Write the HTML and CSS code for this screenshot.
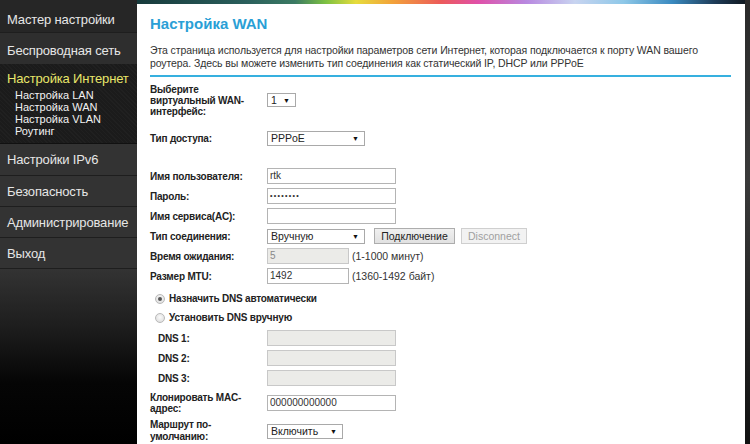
FILE: index.html
```html
<!DOCTYPE html>
<html lang="ru">
<head>
<meta charset="utf-8">
<title>Настройка WAN</title>
<link rel="stylesheet" href="styles.css">
</head>
<body>
<div class="page">
  <nav class="sidebar">
    <div class="nav-item first">Мастер настройки</div>
    <div class="nav-item second">Беспроводная сеть</div>
    <div class="nav-group">
      <div class="nav-group-title">Настройка Интернет</div>
      <div class="nav-sub">Настройка LAN</div>
      <div class="nav-sub">Настройка WAN</div>
      <div class="nav-sub">Настройка VLAN</div>
      <div class="nav-sub">Роутинг</div>
    </div>
    <div class="nav-item tall">Настройки IPv6</div>
    <div class="nav-item">Безопасность</div>
    <div class="nav-item">Администрирование</div>
    <div class="nav-item">Выход</div>
    <div class="nav-fill"></div>
  </nav>

  <main class="content">
    <div class="rainbow"></div>
    <div class="inner">
      <h1 class="title">Настройка WAN</h1>
      <p class="desc">Эта страница используется для настройки параметров сети Интернет, которая подключается к порту WAN вашего роутера. Здесь вы можете изменить тип соединения как статический IP, DHCP или PPPoE</p>
      <div class="rule"></div>

      <div class="form">
        <div class="row row-first">
          <div class="label multi">Выберите<br>виртуальный WAN-<br>интерфейс:</div>
          <div class="select sel-1"><span>1</span><span class="arrow">▼</span></div>
        </div>
        <div class="row row-access">
          <div class="label">Тип доступа:</div>
          <div class="select sel-wide"><span>PPPoE</span><span class="arrow">▼</span></div>
        </div>
        <div class="spacer"></div>
        <div class="row">
          <div class="label">Имя пользователя:</div>
          <div class="input">rtk</div>
        </div>
        <div class="row">
          <div class="label">Пароль:</div>
          <div class="input"><span class="dots">••••••••</span></div>
        </div>
        <div class="row">
          <div class="label">Имя сервиса(AC):</div>
          <div class="input"></div>
        </div>
        <div class="row">
          <div class="label">Тип соединения:</div>
          <div class="select sel-wide"><span>Вручную</span><span class="arrow">▼</span></div>
          <div class="btn btn-connect">Подключение</div>
          <div class="btn btn-disc">Disconnect</div>
        </div>
        <div class="row">
          <div class="label">Время ожидания:</div>
          <div class="input short disabled">5</div>
          <span class="hint">(1-1000 минут)</span>
        </div>
        <div class="row">
          <div class="label">Размер MTU:</div>
          <div class="input short">1492</div>
          <span class="hint">(1360-1492 байт)</span>
        </div>

        <div class="radio-row first-radio">
          <span class="radio checked"></span><span class="radio-label">Назначить DNS автоматически</span>
        </div>
        <div class="radio-row">
          <span class="radio"></span><span class="radio-label">Установить DNS вручную</span>
        </div>

        <div class="row dns-first">
          <div class="label dns">DNS 1:</div>
          <div class="input disabled"></div>
        </div>
        <div class="row">
          <div class="label dns">DNS 2:</div>
          <div class="input disabled"></div>
        </div>
        <div class="row">
          <div class="label dns">DNS 3:</div>
          <div class="input disabled"></div>
        </div>

        <div class="row row-mac">
          <div class="label multi">Клонировать MAC-<br>адрес:</div>
          <div class="input">000000000000</div>
        </div>
        <div class="row row-route">
          <div class="label multi route">Маршрут по-<br>умолчанию:</div>
          <div class="select sel-route"><span>Включить</span><span class="arrow">▼</span></div>
        </div>
      </div>
    </div>
  </main>
  <div class="edge"></div>
</div>
</body>
</html>
```
FILE: styles.css
```css
* { box-sizing: border-box; }

body {
  margin: 0;
  width: 750px;
  height: 444px;
  overflow: hidden;
  background: #000;
  font-family: "Liberation Sans", Arial, sans-serif;
}

.page {
  display: flex;
  height: 444px;
}

/* ---------- sidebar ---------- */
.sidebar {
  width: 137px;
  flex: none;
  display: flex;
  flex-direction: column;
  background: #2f2f2f;
}

.nav-item {
  display: flex;
  align-items: center;
  padding-left: 7px;
  height: 31px;
  font-size: 13px;
  letter-spacing: -0.15px;
  color: #e6e6e6;
  background: #333;
  border-bottom: 1px solid #1e1e1e;
  white-space: nowrap;
}

.nav-item.first {
  height: 33px;
  padding-top: 6px;
  background: #262626;
}

.nav-item.second {
  padding-top: 3px;
  background: #2e2e2e;
  border-bottom: none;
}

.nav-item.tall { height: 32px; }

.nav-group {
  height: 80px;
  padding-top: 7px;
  background-color: #1b1b1b;
  background-image:
    repeating-linear-gradient(45deg, rgba(255,255,255,0.025) 0 1px, transparent 1px 3px);
  border-bottom: 1px solid #111;
}

.nav-group-title {
  padding-left: 7px;
  font-size: 13px;
  letter-spacing: -0.15px;
  line-height: 16px;
  color: #e8e66a;
  margin-bottom: 2px;
  white-space: nowrap;
}

.nav-sub {
  padding-left: 15px;
  font-size: 11px;
  line-height: 12px;
  color: #f2f2f2;
  white-space: nowrap;
}

.nav-fill {
  flex: 1;
  background: linear-gradient(#333 0%, #1c1c1c 35%, #050505 65%, #000 100%);
}

/* ---------- content ---------- */
.content {
  width: 608px;
  flex: none;
  background: #fff;
  display: flex;
  flex-direction: column;
}

.rainbow {
  height: 4px;
  flex: none;
  background: linear-gradient(to right,
    #173a3c 0%, #2a5f5c 18%, #3b7a63 26%, #7cc142 31%,
    #e6dc3c 36%, #f2a23a 42%, #ec5a5a 50%, #e050a8 56%,
    #b888e0 64%, #c8d4f0 72%, #8ec8e8 80%, #3a8ac0 88%,
    #1e3c58 95%, #101820 100%);
}

.inner {
  padding: 0 14px 0 13px;
}

.title {
  margin: 10px 0 0;
  font-size: 15px;
  line-height: 20px;
  font-weight: bold;
  color: #2a9fd6;
}

.desc {
  margin: 10px 0 0;
  font-size: 10.5px;
  letter-spacing: -0.1px;
  line-height: 13px;
  color: #333;
}

.rule {
  height: 2px;
  margin-top: 5px;
  background: #36b0df;
}

/* ---------- form ---------- */
.form {
  display: flex;
  flex-direction: column;
}

.row {
  display: flex;
  align-items: center;
  height: 20px;
}

.label {
  width: 117px;
  flex: none;
  font-size: 10px;
  letter-spacing: -0.2px;
  font-weight: bold;
  color: #222;
  white-space: nowrap;
}

.label.multi { line-height: 11px; }
.label.route { line-height: 12px; }
.label.dns { padding-left: 8px; }

.row-first { height: 34px; margin-top: 6px; }
.row-access { margin-top: 11px; }
.spacer { height: 18px; }

.input {
  width: 129px;
  height: 16px;
  border: 1px solid #b4b4b4;
  background: #fff;
  font-size: 10px;
  line-height: 14px;
  padding-left: 2px;
  color: #333;
}

.input.short { width: 82px; }

.input.disabled {
  background: #ebebe8;
  border-color: #c8c8c8;
  color: #888;
}

.dots {
  font-size: 7px;
  font-weight: bold;
  letter-spacing: 1.3px;
  vertical-align: top;
}

.select {
  display: flex;
  align-items: center;
  justify-content: space-between;
  height: 15px;
  border: 1px solid #a9a9a9;
  background: #fff;
  font-size: 10.5px;
  color: #222;
  padding: 0 5px 0 3px;
}

.sel-1 { width: 29px; height: 14px; }
.sel-wide { width: 98px; }
.sel-route { width: 76px; }

.arrow {
  font-size: 7px;
  color: #111;
}

.btn {
  height: 16px;
  margin-left: 9px;
  border: 1px solid #adadad;
  background: linear-gradient(#f0f0f0, #e1e1e1);
  font-size: 10.5px;
  line-height: 14px;
  text-align: center;
  color: #222;
}

.btn-connect { width: 81px; }

.btn-disc {
  width: 66px;
  margin-left: 6px;
  color: #a0a0a0;
  border-color: #cfcfcf;
  background: #f2f2f2;
}

.hint {
  margin-left: 3px;
  font-size: 10.5px;
  color: #333;
}

.radio-row {
  display: flex;
  align-items: center;
  height: 19px;
  padding-left: 5px;
}

.first-radio { margin-top: 3px; }

.radio {
  width: 10px;
  height: 10px;
  border-radius: 50%;
  border: 1px solid #b9b9b9;
  background: radial-gradient(circle at 50% 40%, #fafafa, #d8d8d8);
  display: flex;
  align-items: center;
  justify-content: center;
}

.radio.checked::after {
  content: "";
  width: 4px;
  height: 4px;
  border-radius: 50%;
  background: #555;
}

.radio-label {
  margin-left: 4px;
  font-size: 10px;
  letter-spacing: -0.2px;
  font-weight: bold;
  color: #222;
}

.dns-first { margin-top: 1px; }

.row-mac { height: 22px; margin-top: 4px; }

.row-route {
  height: 24px;
  margin-top: 5px;
}

/* ---------- right edge ---------- */
.edge {
  flex: 1;
  background: linear-gradient(#2a2a2a, #3a3a3a 40%, #111 100%);
}
```
